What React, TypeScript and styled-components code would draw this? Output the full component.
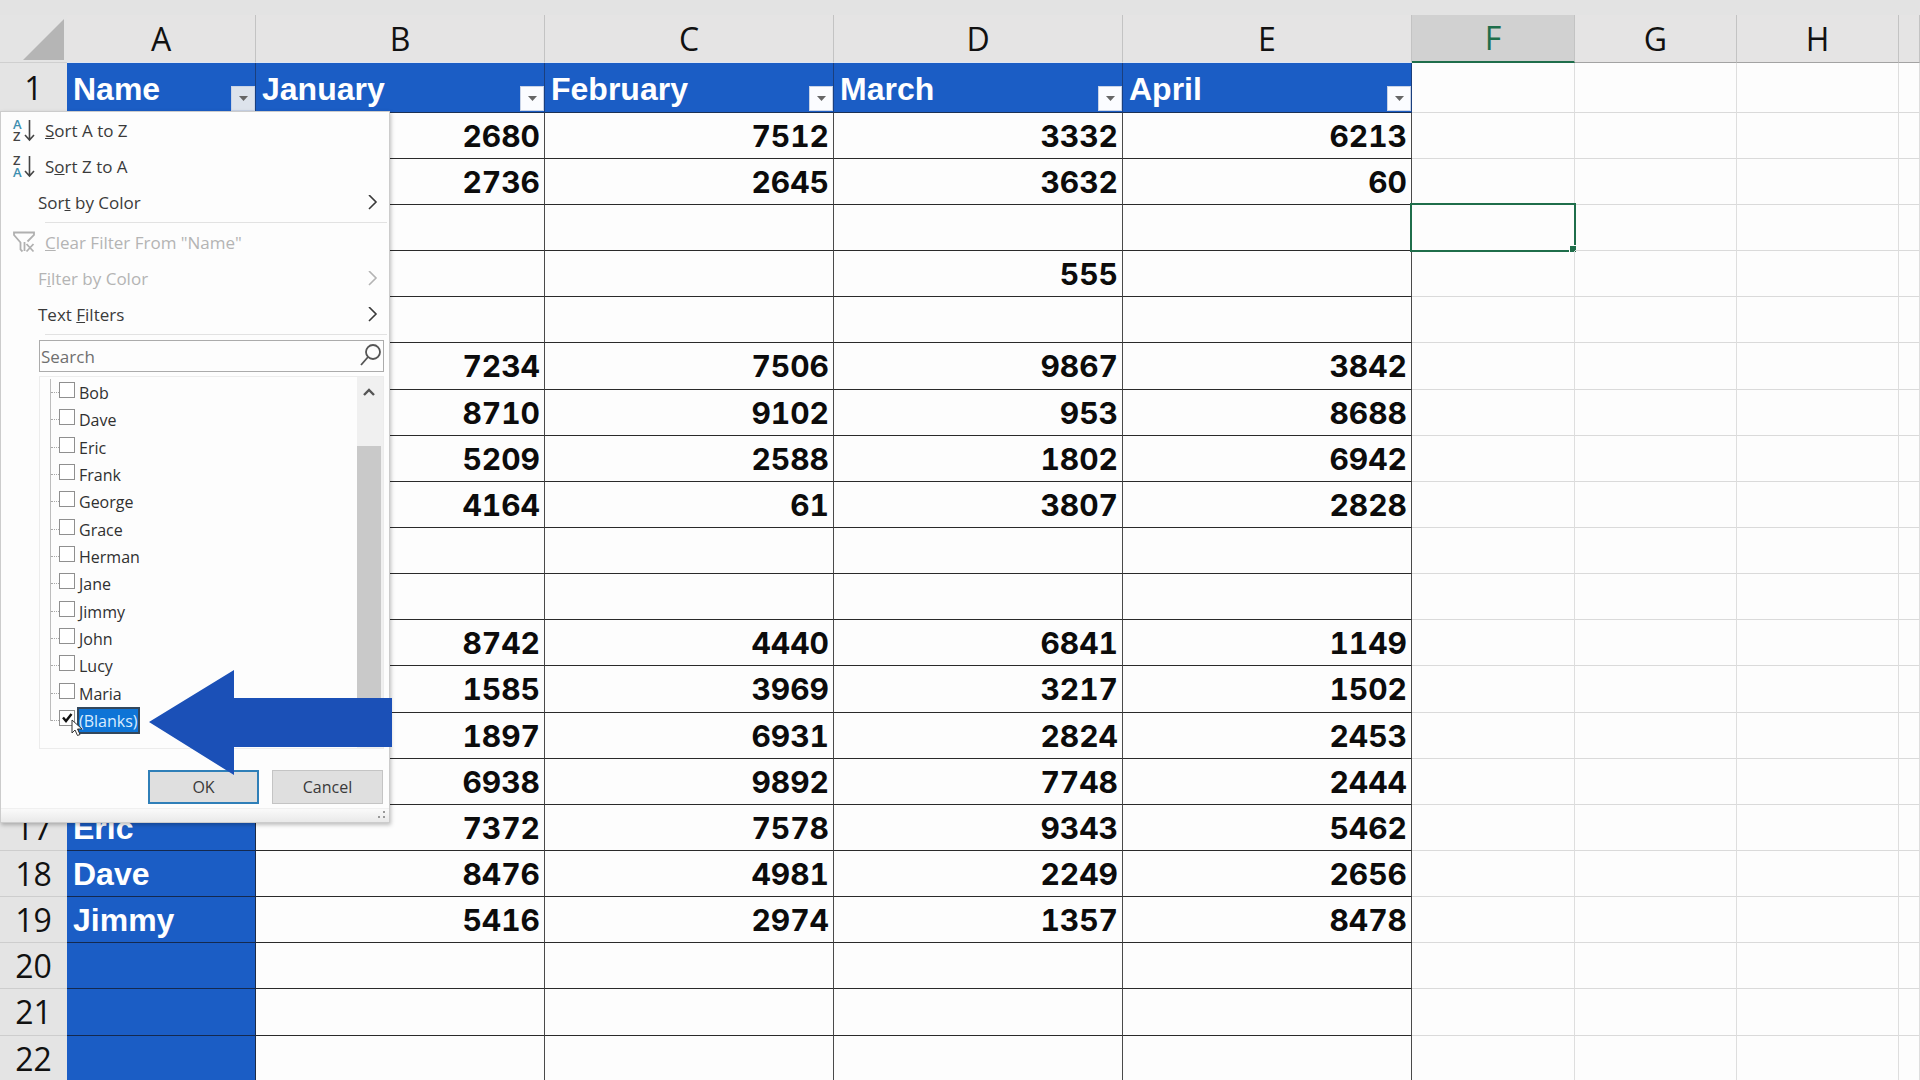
import React from "react";
import styled, { createGlobalStyle, css } from "styled-components";

const UI = `"Open Sans", "Noto Sans", sans-serif`;
const BLUE = "#1b5dc5";
const GREEN = "#1f6e4b";

const GlobalStyle = createGlobalStyle`
  *, *::before, *::after { box-sizing: border-box; }
  body { margin: 0; background: #fdfdfd; overflow: hidden; font-family: ${UI}; }
  button, input { font: inherit; color: inherit; }
`;

const Workbook = styled.main`
  position: relative;
  height: 100vh;
  overflow: hidden;
  padding-top: 15px;
  background: linear-gradient(#e3e3e3 15px, #fdfdfd 15px);
`;

const Sheet = styled.table`
  width: 100%;
  table-layout: fixed;
  border-collapse: separate;
  border-spacing: 0;
`;

const Col = styled.col<{ $w?: number }>`
  width: ${(p) => (p.$w ? `${p.$w}px` : "auto")};
`;

const HeadRow = styled.tr`
  height: 48px;
`;

const Row = styled.tr<{ $tall?: boolean }>`
  height: ${(p) => (p.$tall ? 50 : 46)}px;
  &:nth-child(7n) { height: 47px; }
`;

const ColumnHead = styled.th<{ $active?: boolean; $table?: boolean }>`
  padding: 0;
  font-size: 32px;
  line-height: 40px;
  font-weight: 400;
  color: ${(p) => (p.$active ? GREEN : "#111")};
  background: ${(p) => (p.$active ? "#d1d1d1" : "#e5e4e4")};
  border-right: 1px solid #c3c3c3;
  border-bottom: ${(p) =>
    p.$active ? `2px solid ${GREEN}` : `1px solid ${p.$table ? "#dfe6f2" : "#a3a3a3"}`};
`;

const Corner = styled.th`
  padding: 0 3px 2px 0;
  vertical-align: bottom;
  text-align: right;
  background: #e4e4e4;
  border-bottom: 1px solid #cfcfcf;
  svg { display: block; margin-left: auto; }
`;

const RowHead = styled.th`
  padding: 0;
  font-size: 32px;
  line-height: 40px;
  font-weight: 400;
  text-align: center;
  color: #111;
  background: #e4e4e4;
  border-bottom: 1px solid #cdcdcd;
`;

const cellText = css`
  font-size: 32px;
  line-height: 40px;
  font-weight: 700;
  font-family: "Liberation Sans", Arial, sans-serif;
`;

const FieldHead = styled.th`
  ${cellText}
  padding: 0 0 0 6px;
  text-align: left;
  color: #fff;
  background: ${BLUE};
  border-right: 1px solid #1b3f7d;
  border-bottom: 1px solid #1c3154;
`;

const FieldInner = styled.div`
  display: flex;
  justify-content: space-between;
  align-items: flex-end;
  height: 49px;
  line-height: 46px;
`;

const FilterButton = styled.button<{ $open?: boolean }>`
  display: grid;
  place-items: center;
  width: 24px;
  height: 25px;
  margin-bottom: 1px;
  padding: 0;
  border: 1px solid #c9d3e6;
  background: ${(p) => (p.$open ? "#dde3ec" : "#fbfcff")};
`;

const NameCell = styled.th`
  ${cellText}
  padding: 0 0 0 6px;
  text-align: left;
  color: #fff;
  background: ${BLUE};
  border-right: 1px solid #1d2b44;
  border-bottom: 1px solid #14294f;
`;

const NumberCell = styled.td`
  padding: 0 4px 0 0;
  font: 700 30px/40px Inter, "Liberation Sans", sans-serif;
  font-variant-numeric: tabular-nums;
  text-align: right;
  color: #0c0c0c;
  border-right: 1px solid #4a4a4a;
  border-bottom: 1px solid #2a2a2a;
`;

const EmptyCell = styled.td`
  position: relative;
  padding: 0;
  border-right: 1px solid #dedede;
  border-bottom: 1px solid #dadada;
`;

const Selection = styled.span`
  position: absolute;
  inset: -2px -2px -2px -2px;
  border: 2px solid ${GREEN};
  &::after {
    content: "";
    position: absolute;
    right: -2px;
    bottom: -2px;
    width: 7px;
    height: 7px;
    background: ${GREEN};
    border: solid #fdfdfd;
    border-width: 1px 0 0 1px;
  }
`;

const Panel = styled.form`
  position: absolute;
  top: 111px;
  left: 0;
  width: 390px;
  padding: 1px 0 0;
  display: flex;
  flex-direction: column;
  color: #3a3a3a;
  font-size: 16px;
  background: #fdfdfd;
  border: 1px solid #cccccc;
  box-shadow: 1px 2px 4px rgba(0, 0, 0, 0.25);
`;

const MenuItem = styled.button<{ $indent?: boolean }>`
  display: flex;
  align-items: center;
  height: 36px;
  padding: 0 10px 0 ${(p) => (p.$indent ? 37 : 11)}px;
  border: 0;
  background: none;
  text-align: left;
  font-size: 17px;
  line-height: 24px;
  &:disabled { color: #b4b4b4; }
`;

const ItemIcon = styled.span`
  width: 33px;
  height: 24px;
  flex: none;
  svg { display: block; }
`;

const ItemLabel = styled.span`
  flex: 1;
`;

const Rule = styled.hr`
  width: 342px;
  height: 1px;
  margin: 1px 2px 2px auto;
  border: 0;
  background: #e2e2e2;
`;

const SearchBox = styled.label`
  display: flex;
  align-items: center;
  height: 32px;
  margin: 3px 5px 4px 38px;
  padding-right: 1px;
  font-size: 17px;
  border: 1px solid #ababab;
`;

const SearchInput = styled.input`
  flex: 1;
  min-width: 0;
  height: 30px;
  padding: 0 1px;
  border: 0;
  outline: 0;
  background: none;
  &::placeholder { color: #6f6f6f; opacity: 1; }
`;

const ListFrame = styled.div`
  display: flex;
  height: 373px;
  margin: 0 5px 0 38px;
  border: 1px solid #ececec;
`;

const Names = styled.ul`
  flex: 1;
  margin: 0;
  padding: 2px 0 0 10px;
  list-style: none;
`;

const NameItem = styled.li`
  display: flex;
  align-items: center;
  height: 27px;
  border-left: 1px solid #bdbdbd;
  &:nth-child(3n) { height: 28px; }
  &:last-child { border-image: linear-gradient(#bdbdbd 50%, transparent 50%) 1; border-width: 0 0 0 1px; border-style: solid; }
  &::before {
    content: "";
    width: 8px;
    border-top: 1px dotted #a8a8a8;
  }
`;

const NameLabel = styled.label`
  display: flex;
  align-items: flex-start;
  color: #303030;
  line-height: 24px;
`;

const Tick = styled.input`
  appearance: none;
  width: 16px;
  height: 16px;
  margin: 2px 3px 0 0;
  border: 1px solid #8f8f8f;
  background: #fff;
  &:checked {
    background: #fff url("data:image/svg+xml,%3Csvg xmlns='http://www.w3.org/2000/svg' viewBox='0 0 14 14'%3E%3Cpath d='M3 6.5l3 3.5 5.5-7' fill='none' stroke='%23111' stroke-width='2.4'/%3E%3C/svg%3E");
  }
`;

const NameText = styled.span<{ $selected?: boolean }>`
  padding: 1px 1px 0;
  ${(p) =>
    p.$selected &&
    css`
      color: #d9ecff;
      background: #0e74d6;
      outline: 2px solid #33475c;
      outline-offset: -1px;
    `}
`;

const ScrollBar = styled.div`
  width: 26px;
  padding: 11px 2px 0 0;
  background: #f0f0f0;
  display: flex;
  flex-direction: column;
  align-items: center;
`;

const ScrollThumb = styled.div`
  align-self: stretch;
  height: 260px;
  margin-top: 50px;
  background: #c9c9c9;
`;

const Actions = styled.div`
  display: flex;
  justify-content: flex-end;
  gap: 13px;
  padding: 21px 6px 4px;
`;

const ActionButton = styled.button<{ $primary?: boolean }>`
  width: 111px;
  height: 34px;
  padding: 0;
  line-height: 24px;
  background: #dfdfdf;
  border: ${(p) => (p.$primary ? "2px solid #2f7fb8" : "1px solid #c4c4c4")};
`;

const Footer = styled.div`
  display: flex;
  justify-content: flex-end;
  align-items: flex-end;
  height: 14px;
  padding: 0 3px 2px 0;
  background: linear-gradient(#fafafa, #e9e9e9);
  border-top: 1px solid #f0f0f0;
`;

const Arrow = styled.svg`
  position: absolute;
  left: 149px;
  top: 670px;
`;

const Pointer = styled.svg`
  position: absolute;
  left: 71px;
  top: 719px;
`;

const SortIcon = ({ top, bottom }: { top: string; bottom: string }) => {
  const tint = (c: string) => (c === "A" ? "#3d8fb0" : "#444");
  return (
    <svg width="24" height="24" viewBox="0 0 24 24" overflow="visible" fontFamily="Open Sans" fontSize="13" fontWeight="600">
      <text x="1" y="10" fill={tint(top)}>{top}</text>
      <text x="1" y="22" fill={tint(bottom)}>{bottom}</text>
      <path d="M17.5 1v20M13 16l4.5 5 4.5-5" fill="none" stroke="#444" strokeWidth="1.6" />
    </svg>
  );
};

const FunnelIcon = () => (
  <svg width="24" height="24" viewBox="0 0 24 24" fill="none" stroke="#b0b0b0" strokeWidth="1.800">
    <path d="M10.500 20.500l-2-2v-7L2 4V1.500h20V4l-6.500 6.500M12.500 20v-9M14.500 13l7 7.500M21.500 13l-7 7.500" />
  </svg>
);

const Chevron = () => (
  <svg width="12" height="16" viewBox="0 0 12 16" fill="none" stroke="currentColor" strokeWidth="1.6">
    <path d="M2 0l7 7-7 7" />
  </svg>
);

const columns = ["A", "B", "C", "D", "E", "F", "G", "H", ""];
const widths = [67, 189, 289, 289, 289, 289, 163, 162, 162, undefined];
const fields = ["Name", "January", "February", "March", "April"];
const rows: (string | number)[][] = [
  ["", 2680, 7512, 3332, 6213],
  ["", 2736, 2645, 3632, 60],
  ["", "", "", "", ""],
  ["", "", "", 555, ""],
  ["", "", "", "", ""],
  ["", 7234, 7506, 9867, 3842],
  ["", 8710, 9102, 953, 8688],
  ["", 5209, 2588, 1802, 6942],
  ["", 4164, 61, 3807, 2828],
  ["", "", "", "", ""],
  ["", "", "", "", ""],
  ["", 8742, 4440, 6841, 1149],
  ["", 1585, 3969, 3217, 1502],
  ["", 1897, 6931, 2824, 2453],
  ["", 6938, 9892, 7748, 2444],
  ["Eric", 7372, 7578, 9343, 5462],
  ["Dave", 8476, 4981, 2249, 2656],
  ["Jimmy", 5416, 2974, 1357, 8478],
  ["", "", "", "", ""],
  ["", "", "", "", ""],
  ["", "", "", "", ""],
];
const spare = [0, 1, 2, 3];
const names = ["Bob", "Dave", "Eric", "Frank", "George", "Grace", "Herman", "Jane", "Jimmy", "John", "Lucy", "Maria", "(Blanks)"];

const Grid = () => (
  <Sheet>
    <colgroup>
      {widths.map((w, i) => <Col key={i} $w={w} />)}
    </colgroup>
    <thead>
      <HeadRow>
        <Corner>
          <svg width="41" height="41" viewBox="0 0 41 41"><path d="M41 0v41H0z" fill="#b5b5b5" /></svg>
        </Corner>
        {columns.map((c, i) => (
          <ColumnHead key={i} $active={c === "F"} $table={i < 5}>{c}</ColumnHead>
        ))}
      </HeadRow>
    </thead>
    <tbody>
      <Row $tall>
        <RowHead>1</RowHead>
        {fields.map((f, i) => (
          <FieldHead key={f}>
            <FieldInner>
              {f}
              <FilterButton type="button" $open={i === 0} aria-label={`Filter ${f}`}>
                <svg width="9" height="5" viewBox="0 0 9 5"><path d="M0 0h9L4.500 5z" fill="#666" /></svg>
              </FilterButton>
            </FieldInner>
          </FieldHead>
        ))}
        {spare.map((s) => <EmptyCell key={s} />)}
      </Row>
      {rows.map((r, i) => (
        <Row key={i}>
          <RowHead>{i + 2}</RowHead>
          <NameCell>{r[0]}</NameCell>
          {r.slice(1).map((v, j) => <NumberCell key={j}>{v}</NumberCell>)}
          {spare.map((s) => (
            <EmptyCell key={s}>{i === 2 && s === 0 && <Selection />}</EmptyCell>
          ))}
        </Row>
      ))}
    </tbody>
  </Sheet>
);

const FilterPanel = () => (
  <Panel onSubmit={(e) => e.preventDefault()}>
    <MenuItem type="button">
      <ItemIcon><SortIcon top="A" bottom="Z" /></ItemIcon>
      <ItemLabel><u>S</u>ort A to Z</ItemLabel>
    </MenuItem>
    <MenuItem type="button">
      <ItemIcon><SortIcon top="Z" bottom="A" /></ItemIcon>
      <ItemLabel>S<u>o</u>rt Z to A</ItemLabel>
    </MenuItem>
    <MenuItem type="button" $indent>
      <ItemLabel>Sor<u>t</u> by Color</ItemLabel>
      <Chevron />
    </MenuItem>
    <Rule />
    <MenuItem type="button" disabled>
      <ItemIcon><FunnelIcon /></ItemIcon>
      <ItemLabel><u>C</u>lear Filter From "Name"</ItemLabel>
    </MenuItem>
    <MenuItem type="button" $indent disabled>
      <ItemLabel>F<u>i</u>lter by Color</ItemLabel>
      <Chevron />
    </MenuItem>
    <MenuItem type="button" $indent>
      <ItemLabel>Text <u>F</u>ilters</ItemLabel>
      <Chevron />
    </MenuItem>
    <Rule />
    <SearchBox>
      <SearchInput placeholder="Search" aria-label="Search" />
      <svg width="22" height="24" viewBox="0 0 22 24" fill="none" stroke="#555" strokeWidth="1.8">
        <circle cx="13" cy="8" r="7" /><path d="M8 13l-7 8" />
      </svg>
    </SearchBox>
    <ListFrame>
      <Names>
        {names.map((n) => {
          const blank = n === "(Blanks)";
          return (
            <NameItem key={n}>
              <NameLabel>
                <Tick type="checkbox" defaultChecked={blank} />
                <NameText $selected={blank}>{n}</NameText>
              </NameLabel>
            </NameItem>
          );
        })}
      </Names>
      <ScrollBar>
        <svg width="12" height="8" viewBox="0 0 12 8" fill="none" stroke="#555" strokeWidth="2.400"><path d="M1 7l5-5 5 5" /></svg>
        <ScrollThumb />
      </ScrollBar>
    </ListFrame>
    <Actions>
      <ActionButton type="submit" $primary>OK</ActionButton>
      <ActionButton type="button">Cancel</ActionButton>
    </Actions>
    <Footer>
      <svg width="9" height="9" viewBox="0 0 9 9" fill="#999"><path d="M6 0h2v2h-2zM6 5h2v2h-2zM1 5h2v2h-2z" /></svg>
    </Footer>
  </Panel>
);

export default function App() {
  return (
    <Workbook>
      <GlobalStyle />
      <Grid />
      <FilterPanel />
      <Arrow width="243" height="105" viewBox="0 0 243 105">
        <path d="M0 52L85 0v28h158v49H85v28z" fill="#1b50b7" />
      </Arrow>
      <Pointer width="12" height="18" viewBox="0 0 12 18">
        <path d="M1 1v13l3-3 2.500 5.500 2.500-1-2.500-5.500h4.500z" fill="#fff" stroke="#333" />
      </Pointer>
    </Workbook>
  );
}
